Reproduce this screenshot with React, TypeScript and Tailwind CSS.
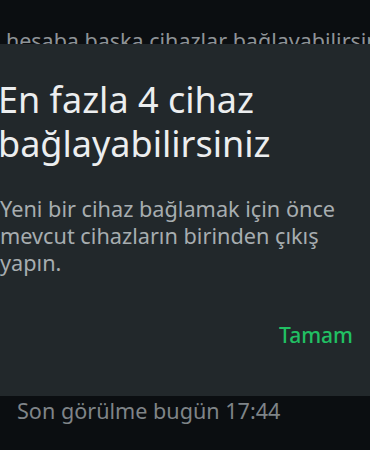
export default function App() {
  return (
    <div
      className="w-[370px] h-[450px] overflow-hidden bg-[#0b0e11] flex flex-col"
      style={{ fontFamily: '"Noto Sans", "Open Sans", sans-serif' }}
    >
      <div className="h-[44px] overflow-hidden shrink-0">
        <p className="pt-[27px] -ml-[13px] whitespace-nowrap text-[21.5px] leading-[28px] text-[#8e9397]">
          u hesaba başka cihazlar bağlayabilirsiniz
        </p>
      </div>
      <div className="h-[352px] shrink-0 bg-[#22282b] flex flex-col">
        <h1 className="mt-[34px] -ml-[2px] text-[36px] leading-[44px] text-[#eceeef]">
          En fazla 4 cihaz
          <br />
          bağlayabilirsiniz
        </h1>
        <p className="mt-[29px] ml-0 text-[21.7px] leading-[27px] text-[#a7adb0]">
          Yeni bir cihaz bağlamak için önce
          <br />
          mevcut cihazların birinden çıkış
          <br />
          yapın.
        </p>
        <div className="mt-[45px] flex justify-end pr-[17px]">
          <span className="text-[21px] leading-[28px] font-medium text-[#21c063]">Tamam</span>
        </div>
      </div>
      <div className="flex-1">
        <p className="pt-[1px] pl-[17px] text-[21.6px] leading-[28px] text-[#7f8488]">
          Son görülme bugün 17:44
        </p>
      </div>
    </div>
  );
}
